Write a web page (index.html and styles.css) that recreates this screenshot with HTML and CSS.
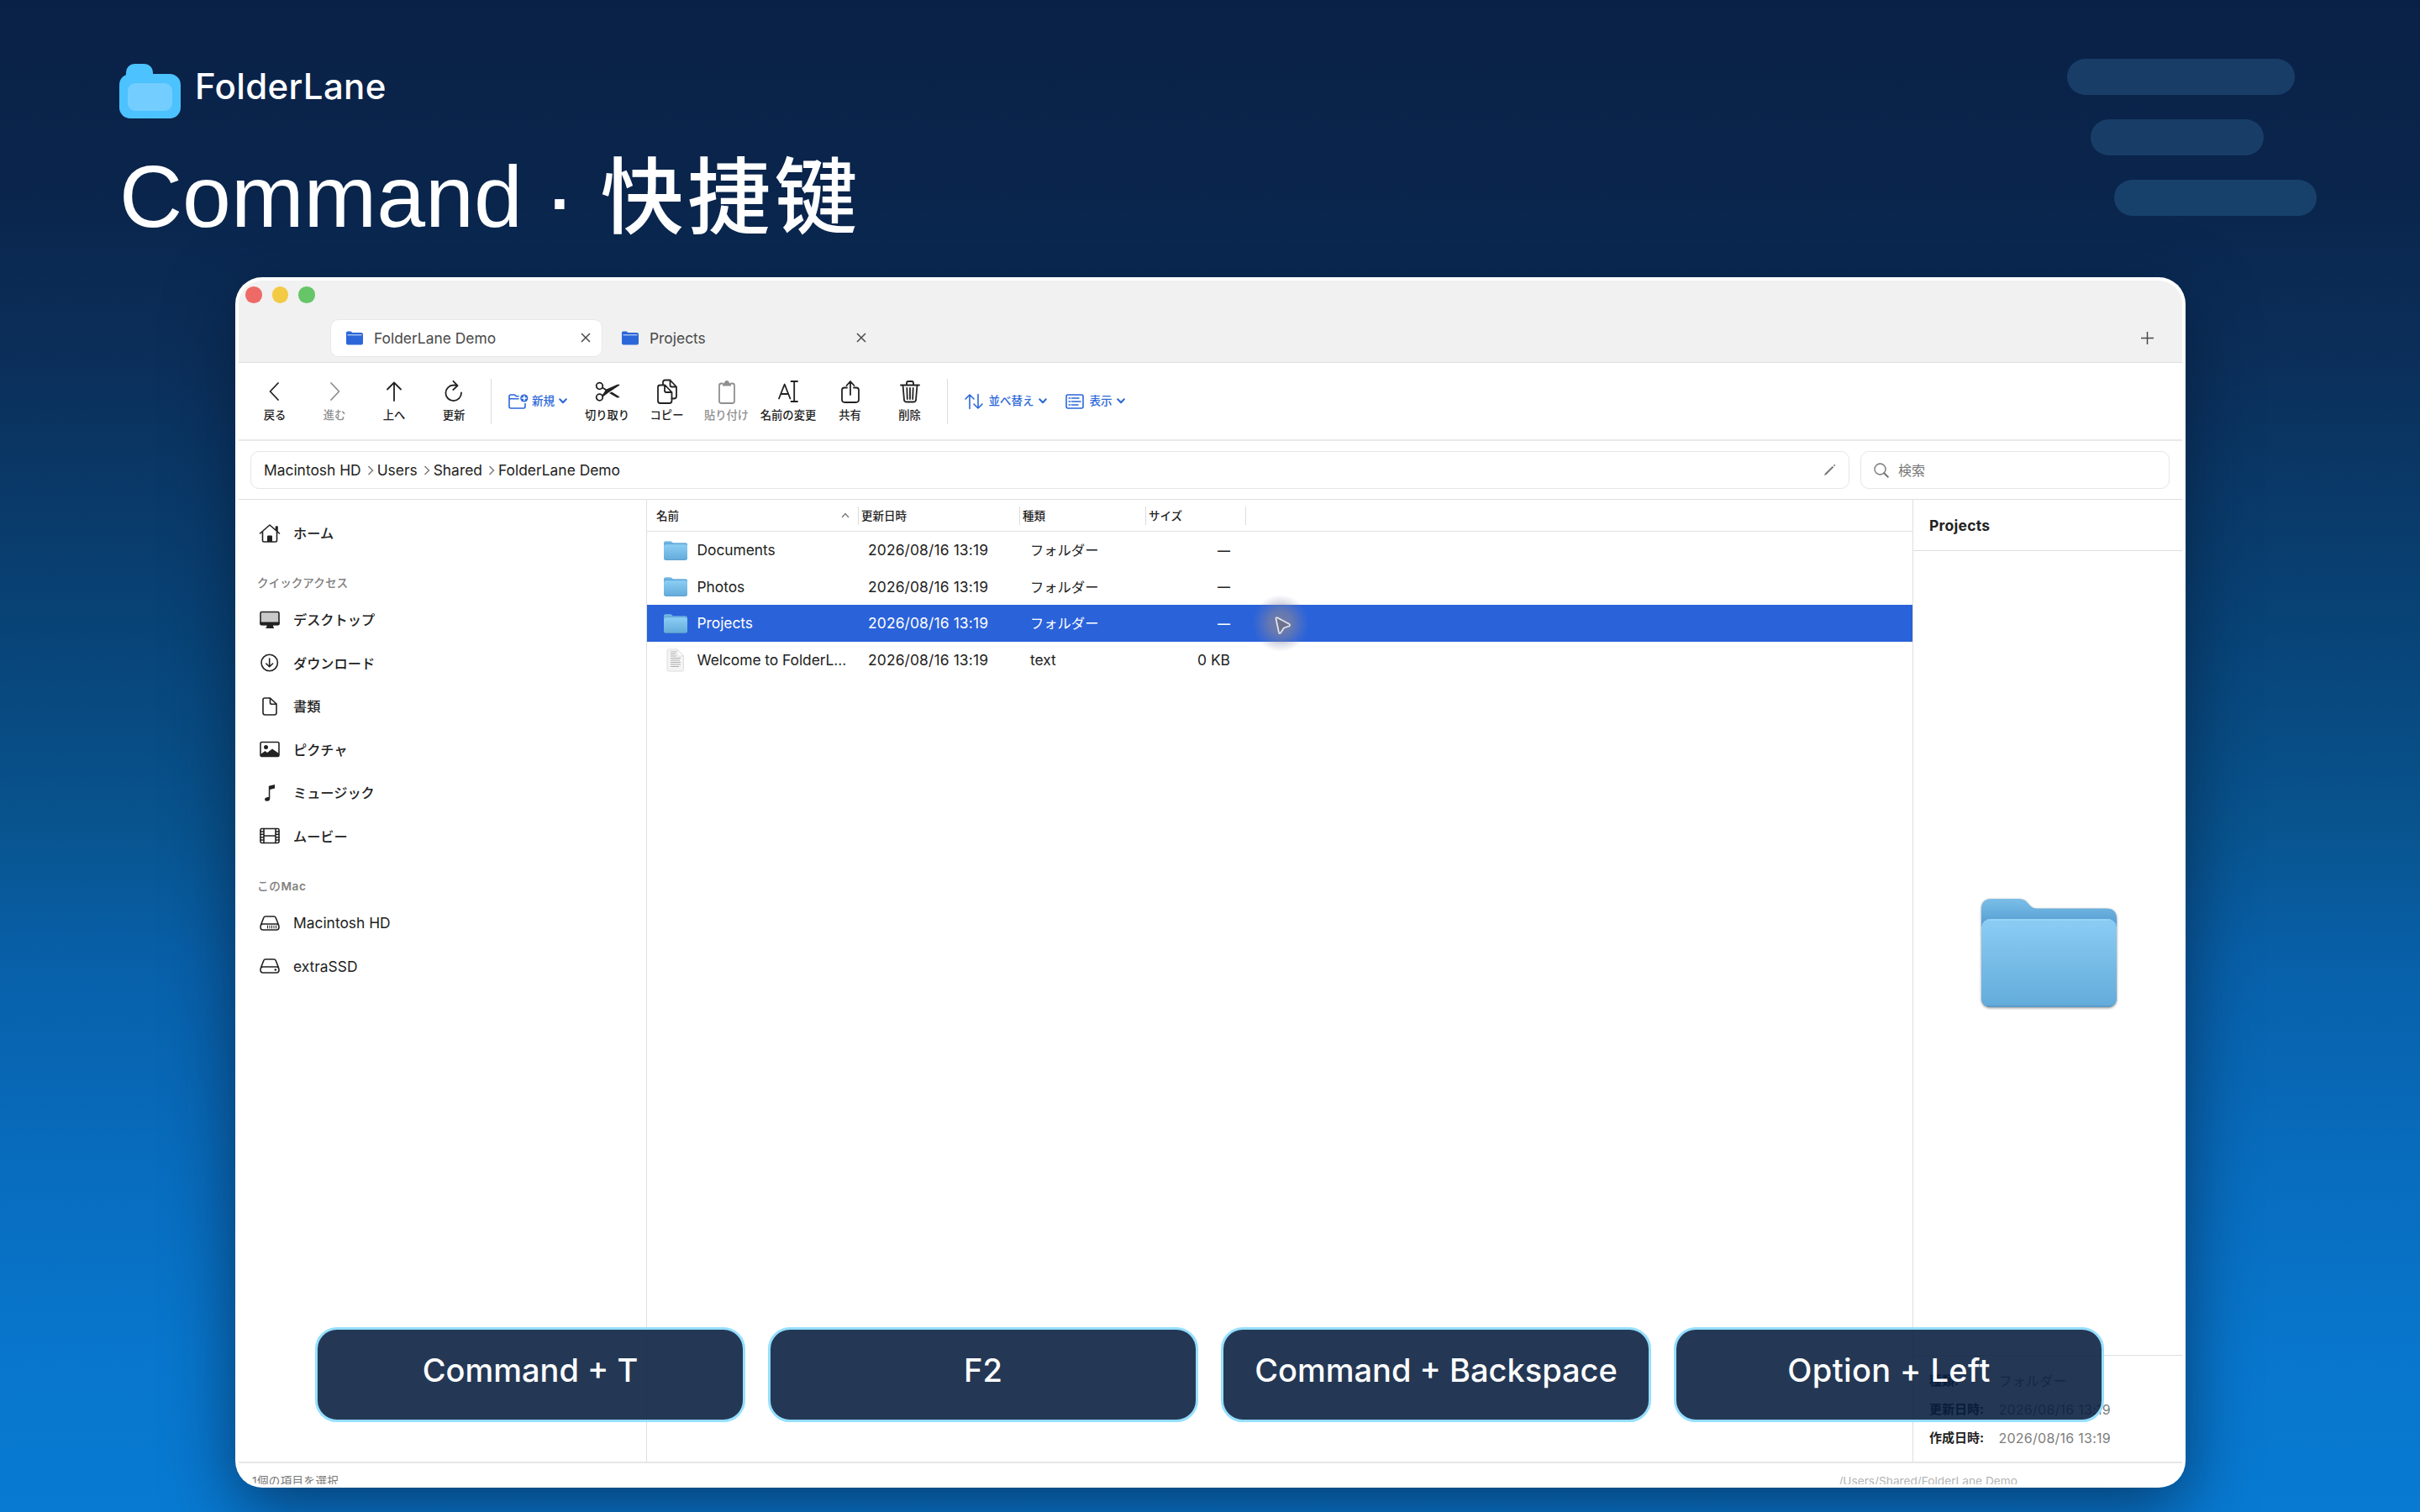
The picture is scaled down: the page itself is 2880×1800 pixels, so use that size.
FILE: index.html
```html
<!DOCTYPE html>
<html lang="ja">
<head>
    <meta charset="UTF-8">
    <meta name="viewport" content="width=device-width, initial-scale=1.0">
    <title>FolderLane | Shortcuts</title>
    <link rel="stylesheet" href="styles.css">
</head>
<body>
    <!-- Shared icons -->
    <svg class="defs" width="0" height="0">
        <defs>
            <linearGradient id="back" x1="0" y1="0" x2="0" y2="1">
                <stop offset="0" stop-color="#7bbfe8"/>
                <stop offset="0.2" stop-color="#5ba3d6"/>
                <stop offset="0.3" stop-color="#4a92cb"/>
            </linearGradient>
            <linearGradient id="front" x1="0" y1="0" x2="0" y2="1">
                <stop offset="0" stop-color="#8bcdf4"/>
                <stop offset="0.97" stop-color="#64acdb"/>
                <stop offset="1" stop-color="#5596c4"/>
            </linearGradient>
            <symbol id="folder" viewBox="0 0 161 130">
                <path d="M0 12Q0 0 12 0H45Q52 0 56 6Q60 11.5 66 11.5H149Q161 11.5 161 24V117Q161 129 149 129H12Q0 129 0 117Z" fill="url(#back)"/>
                <path d="M0 34Q1 24 12 24H149Q160 24 161 34V117Q161 129 149 129H12Q0 129 0 117Z" fill="url(#front)"/>
                <path d="M7 25H154" stroke="#a5dbf8" stroke-width="1.2"/>
            </symbol>
            <symbol id="tab-folder" viewBox="0 0 20 17">
                <path d="M0 2Q0 0.5 1.5 0.5H5.5L7.5 2H18Q20 2 20 4V14.500Q20 16.500 18 16.500H2Q0 16.500 0 14.500Z" fill="#2b67d8"/>
                <path d="M1.500 4.800H18.500" stroke="#dfe9fb" stroke-width="1"/>
            </symbol>
            <symbol id="close" viewBox="0 0 12 12">
                <path d="M1 1L11 11M11 1L1 11" fill="none" stroke="#4a4a4a" stroke-width="1.5"/>
            </symbol>
            <symbol id="crumb" viewBox="0 0 8 12">
                <path d="M1.500 1L6.500 6L1.500 11" fill="none" stroke="#7d7d7d" stroke-width="1.500"/>
            </symbol>
            <symbol id="chevron" viewBox="0 0 10 7">
                <path d="M1.200 1.200L5 5.200L8.800 1.200" fill="none" stroke="#2b67d8" stroke-width="2" stroke-linecap="round" stroke-linejoin="round"/>
            </symbol>
        </defs>
    </svg>

    <header class="hero">
        <div class="hero-text">
            <div class="brand">
                <svg class="brand-logo" width="73" height="65" viewBox="0 0 73 65">
                    <rect x="8" y="0" width="32" height="30" rx="10" fill="#4cc2ff"/>
                    <rect x="0" y="12" width="73" height="53" rx="13" fill="#4cc2ff"/>
                    <rect x="10" y="23" width="53" height="33" rx="9" fill="#73ceff"/>
                </svg>
                <span class="brand-name">FolderLane</span>
            </div>
            <h1>Command <b>·</b> <span>快捷键</span></h1>
        </div>
        <div class="lanes">
            <div class="lane lane-1"></div>
            <div class="lane lane-2"></div>
            <div class="lane lane-3"></div>
        </div>
    </header>

    <div class="window">
        <div class="app">
            <div class="tabbar">
                <div class="lights">
                    <i class="red"></i><i class="yellow"></i><i class="green"></i>
                </div>
                <div class="tabs">
                    <div class="tab active">
                        <svg width="20" height="17"><use href="#tab-folder"/></svg>
                        <span>FolderLane Demo</span>
                        <svg width="12" height="12"><use href="#close"/></svg>
                    </div>
                    <div class="tab">
                        <svg width="20" height="17"><use href="#tab-folder"/></svg>
                        <span>Projects</span>
                        <svg width="12" height="12"><use href="#close"/></svg>
                    </div>
                    <svg class="add-tab" width="15" height="15" viewBox="0 0 15 15"><path d="M7.500 0V15M0 7.500H15" stroke="#4a4a4a" stroke-width="1.500"/></svg>
                </div>
            </div>

            <div class="toolbar">
                <div class="tool">
                    <svg width="30" height="30" viewBox="0 0 30 30"><path d="M19 5L9.500 15L19 25"/></svg>
                    <span>戻る</span>
                </div>
                <div class="tool disabled">
                    <svg width="30" height="30" viewBox="0 0 30 30"><path d="M11 5L20.500 15L11 25"/></svg>
                    <span>進む</span>
                </div>
                <div class="tool">
                    <svg width="30" height="30" viewBox="0 0 30 30"><path d="M15 26V4.500M7 12.500L15 4.500L23 12.500"/></svg>
                    <span>上へ</span>
                </div>
                <div class="tool">
                    <svg width="30" height="30" viewBox="0 0 30 30"><path d="M24 16.500A9.300 9.300 0 1 1 14.700 7.500Q17 7.400 19 8.200M14.500 2.800L19.600 8.200L14.300 13"/></svg>
                    <span>更新</span>
                </div>
                <div class="divider"></div>
                <div class="menu menu-new">
                    <svg width="24" height="18" viewBox="0 0 24 18"><path d="M12 2.800H9.500L7.500 1H3Q1 1 1 3V15Q1 17 3 17H18Q20 17 20 15V11.500M1 5.800H12"/><circle cx="18.800" cy="5" r="4.600" fill="#2b67d8" stroke="none"/><path d="M18.800 2.500V7.500M16.300 5H21.300" stroke="#fff"/></svg>
                    <span>新規</span>
                    <svg width="10" height="7"><use href="#chevron"/></svg>
                </div>
                <div class="tool">
                    <svg width="30" height="30" viewBox="0 0 30 30"><circle cx="5.500" cy="8.500" r="3.800"/><circle cx="5.500" cy="22" r="3.800"/><path d="M9 10.500L13 13M9 20L13.500 16.500"/><path d="M8.700 19.700L13 12.700L26 7Q29 6 29.500 7.500L16 16.500L10 21ZM17 17L20 15.500L29.500 21.500Q28.500 23 26 22.300Z" fill="#222" stroke="none"/></svg>
                    <span>切り取り</span>
                </div>
                <div class="tool">
                    <svg width="30" height="30" viewBox="0 0 30 30"><path d="M10 7V4Q10 1.500 12.500 1.500H18.500L26 9.500V20.500Q26 23.500 23 23.500H20.500M18.500 1.500V7.500Q18.500 9.500 20.500 9.500H26"/><path d="M6.500 7.500H12.500L20.500 16V26Q20.500 29 17.500 29H6.500Q4 29 4 26V10Q4 7.500 6.500 7.500ZM12 7.500V14Q12 16 14 16H20.500"/></svg>
                    <span>コピー</span>
                </div>
                <div class="tool disabled">
                    <svg width="30" height="30" viewBox="0 0 30 30"><path d="M10 5.500H8.500Q6 5.500 6 8V26.500Q6 29 8.500 29H21.500Q24 29 24 26.500V8Q24 5.500 21.500 5.500H20"/><path d="M10 8.500V6.500Q10 5 12 5Q12.500 2 15 2Q17.500 2 18 5Q20 5 20 6.500V8.500Z" fill="#8f8f8f" stroke="none"/></svg>
                    <span>貼り付け</span>
                </div>
                <div class="tool wide">
                    <svg width="30" height="30" viewBox="0 0 30 30"><path d="M4 23.500L10.700 6.500L17.400 23.500M6.200 18H15.200M18.500 3H26M18.500 27H26M22.200 3V27"/></svg>
                    <span>名前の変更</span>
                </div>
                <div class="tool">
                    <svg width="30" height="30" viewBox="0 0 30 30"><path d="M11 10.500H8Q5 10.500 5 13.500V24.500Q5 28 8.500 28H21.500Q25 28 25 24.500V13.500Q25 10.500 22 10.500H19M15 19V3.500M10.500 8L15 3L19.500 8"/></svg>
                    <span>共有</span>
                </div>
                <div class="tool">
                    <svg width="30" height="30" viewBox="0 0 30 30"><path d="M4 7.500H26M6.500 7.500L8 25Q8.200 27.500 10.500 27.500H19.500Q21.800 27.500 22 25L23.500 7.500M11 7V5Q11 3 13 3H17Q19 3 19 5V7M11.300 11L11.800 24M15 11V24M18.700 11L18.200 24"/></svg>
                    <span>削除</span>
                </div>
                <div class="divider"></div>
                <div class="menu menu-sort">
                    <svg width="22" height="20" viewBox="0 0 22 20"><path d="M6 18.500V2M1 7L6 2L11 7M16 1.500V18M11 13L16 18L21 13"/></svg>
                    <span>並べ替え</span>
                    <svg width="10" height="7"><use href="#chevron"/></svg>
                </div>
                <div class="menu menu-view">
                    <svg width="22" height="18" viewBox="0 0 22 18"><rect x="1" y="1" width="20" height="16" rx="2"/><path d="M4.200 5H5.600M4.200 9H5.600M4.200 13H5.600M7.500 5H16M7.500 9H18M7.500 13H15"/></svg>
                    <span>表示</span>
                    <svg width="10" height="7"><use href="#chevron"/></svg>
                </div>
            </div>

            <div class="pathbar">
                <div class="path">
                    <span>Macintosh HD</span>
                    <svg width="8" height="12"><use href="#crumb"/></svg>
                    <span>Users</span>
                    <svg width="8" height="12"><use href="#crumb"/></svg>
                    <span>Shared</span>
                    <svg width="8" height="12"><use href="#crumb"/></svg>
                    <span>FolderLane Demo</span>
                    <svg class="pencil" width="15" height="15" viewBox="0 0 15 15"><path d="M1 14L2 11.500L10.800 2.900L12.300 4.300L3.500 13Z" fill="#777"/><path d="M11.800 1.900L13 0.800L14.300 2L13.200 3.200Z" fill="#777"/></svg>
                </div>
                <div class="search">
                    <svg width="18" height="18" viewBox="0 0 18 18"><circle cx="7.500" cy="7.500" r="6.500" fill="none" stroke="#777" stroke-width="1.400"/><path d="M12.300 12.300L16.800 16.800" stroke="#777" stroke-width="2" stroke-linecap="round"/></svg>
                    <span>検索</span>
                </div>
            </div>

            <div class="content">
                <aside class="sidebar">
                    <div class="side-item">
                        <svg width="26" height="26" viewBox="0 0 26 26"><path d="M1.500 13L13 3L24.500 13M4.500 11V21.500Q4.500 23 6 23H20Q21.500 23 21.500 21.500V11M20.500 9V5H22V10.500"/><path d="M10 23V16.500Q10 15.500 11 15.500H15Q16 15.500 16 16.500V23Z" fill="#222" stroke="none"/></svg>
                        <span>ホーム</span>
                    </div>
                    <div class="side-title">クイックアクセス</div>
                    <div class="side-item">
                        <svg width="26" height="26" viewBox="0 0 26 26"><rect x="2" y="3.500" width="22" height="15" rx="1.500" fill="#c9c9c9"/><path d="M1.300 15.500H24.700V17.500Q24.700 19.500 23 19.500H17V21.500H18V23H8.500V21.500H9.500V19.500H3Q1.300 19.500 1.300 17.500Z" fill="#222" stroke="none"/></svg>
                        <span>デスクトップ</span>
                    </div>
                    <div class="side-item">
                        <svg width="26" height="26" viewBox="0 0 26 26"><circle cx="12.700" cy="13" r="9.700"/><path d="M12.700 8V17.500M8.800 14L12.700 17.800L16.600 14"/></svg>
                        <span>ダウンロード</span>
                    </div>
                    <div class="side-item">
                        <svg width="26" height="26" viewBox="0 0 26 26"><path d="M7 3H13.500L21 10V20.500Q21 23 18.500 23H7.500Q5 23 5 20.500V5Q5 3 7 3ZM13.500 3V8.500Q13.500 10.300 15.500 10.300H21"/></svg>
                        <span>書類</span>
                    </div>
                    <div class="side-item">
                        <svg width="26" height="26" viewBox="0 0 26 26"><rect x="2" y="4.500" width="22" height="17" rx="1.500"/><circle cx="8.500" cy="10.500" r="2.500" fill="#222" stroke="none"/><path d="M2 19L7.500 15L10 17L16 12.500L24 18V20.500Q24 21.500 22 21.500H4Q2 21.500 2 20.500Z" fill="#222" stroke="none"/></svg>
                        <span>ピクチャ</span>
                    </div>
                    <div class="side-item">
                        <svg width="26" height="26" viewBox="0 0 26 26"><path d="M11.800 4.800L19 3V7.500L13.300 9V19.500Q13.300 22.800 9.500 22.800Q7 22.800 7 20.700Q7 18.800 9.500 18.300L11.800 17.800Z" fill="#222" stroke="none"/></svg>
                        <span>ミュージック</span>
                    </div>
                    <div class="side-item">
                        <svg width="26" height="26" viewBox="0 0 26 26"><rect x="2" y="4.500" width="22" height="17" rx="1.500"/><path d="M6 4.500V21.500M20 4.500V21.500M6 13H20M2 8H6M2 11.300H6M2 14.700H6M2 18H6M20 8H24M20 11.300H24M20 14.700H24M20 18H24"/></svg>
                        <span>ムービー</span>
                    </div>
                    <div class="side-title mac">この<b>Mac</b></div>
                    <div class="side-item latin">
                        <svg width="26" height="26" viewBox="0 0 26 26"><path d="M2.500 15L5.800 6.500Q6.400 5 8 5H18Q19.600 5 20.200 6.500L23.500 15M5 14H21Q24 14 24 17.500Q24 21 21 21H5Q2 21 2 17.500Q2 14 5 14Z"/><path d="M10.500 16V19M13 16V19M15.500 16V19M18 16V19M20.500 16V19" stroke-width="1"/></svg>
                        <span>Macintosh HD</span>
                    </div>
                    <div class="side-item latin">
                        <svg width="26" height="26" viewBox="0 0 26 26"><path d="M2.500 15L5.800 6.500Q6.400 5 8 5H18Q19.600 5 20.200 6.500L23.500 15M5 14H21Q24 14 24 17.500Q24 21 21 21H5Q2 21 2 17.500Q2 14 5 14Z"/><circle cx="19.800" cy="17.500" r="1.300" fill="#222" stroke="none"/></svg>
                        <span>extraSSD</span>
                    </div>
                </aside>

                <main class="files">
                    <div class="file-head">
                        <div class="name-head">名前 <svg width="10" height="7" viewBox="0 0 10 7"><path d="M1 6L5 1.500L9 6" fill="none" stroke="#777" stroke-width="1.300"/></svg></div>
                        <div>更新日時</div>
                        <div>種類</div>
                        <div>サイズ</div>
                    </div>
                    <div class="file-row">
                        <div class="file-name"><svg width="28" height="23"><use href="#folder"/></svg>Documents</div>
                        <div class="date">2026/08/16 13:19</div>
                        <div class="kind">フォルダー</div>
                        <div class="size dash">—</div>
                    </div>
                    <div class="file-row">
                        <div class="file-name"><svg width="28" height="23"><use href="#folder"/></svg>Photos</div>
                        <div class="date">2026/08/16 13:19</div>
                        <div class="kind">フォルダー</div>
                        <div class="size dash">—</div>
                    </div>
                    <div class="file-row selected">
                        <div class="file-name"><svg width="28" height="23"><use href="#folder"/></svg>Projects</div>
                        <div class="date">2026/08/16 13:19</div>
                        <div class="kind">フォルダー</div>
                        <div class="size dash">—</div>
                        <div class="cursor">
                            <svg width="22" height="24" viewBox="0 0 22 24"><path d="M2.500 3.500Q2.500 1.500 4.500 2.500L18.500 10Q20 11.500 18 12.500L12 14.500L8 20.500Q6.500 22 6 20Z" fill="#6b7390" stroke="#e6e6ea" stroke-width="1.700" stroke-linejoin="round"/></svg>
                        </div>
                    </div>
                    <div class="file-row">
                        <div class="file-name"><svg width="28" height="28" viewBox="0 0 28 28"><path d="M5.500 1H16L23.500 9V25.500Q23.500 27 22 27H5.500Q4 27 4 25.500V2.500Q4 1 5.500 1Z" fill="#f4f4f4" stroke="#dedede"/><path d="M16 1V7.500Q16 9 17.500 9H23.500Z" fill="#fff" stroke="#ddd"/><path d="M8 4H15M8 6.500H14M8 9H15M8 11.500H20M8 14H19M8 16.500H20M8 19H20M8 21.500H18" stroke="#b0b0b0" stroke-width="1.200"/></svg>Welcome to FolderL...</div>
                        <div class="date">2026/08/16 13:19</div>
                        <div class="kind text">text</div>
                        <div class="size">0 KB</div>
                    </div>
                </main>

                <aside class="preview">
                    <div class="preview-title">Projects</div>
                    <div class="preview-body">
                        <svg class="big-folder" width="161" height="130"><use href="#folder"/></svg>
                    </div>
                    <div class="details">
                        <div class="detail"><b>種類:</b><span>フォルダー</span></div>
                        <div class="detail"><b>更新日時:</b><span>2026/08/16 13:19</span></div>
                        <div class="detail"><b>作成日時:</b><span>2026/08/16 13:19</span></div>
                    </div>
                </aside>
            </div>

            <div class="statusbar">
                <span>1個の項目を選択</span>
                <span class="status-path">/Users/Shared/FolderLane Demo</span>
            </div>
        </div>

        <!-- Shortcut keys over the window -->
        <div class="keys">
            <div class="key">Command + T</div>
            <div class="key">F2</div>
            <div class="key">Command + Backspace</div>
            <div class="key option">Option + Left</div>
        </div>
    </div>
</body>
</html>
```
FILE: styles.css
```css
* {
    box-sizing: border-box;
}

body {
    margin: 0;
    height: 1800px;
    overflow: hidden;
    font-family: Inter, "Noto Sans CJK JP", sans-serif;
    color: #222;
    background: linear-gradient(#0a2147 0, #0a254c 230px, #0b2f5a 430px, #084478 758px, #08548f 987px, #0860a9 1148px, #086cbd 1378px, #0876cc 1607px, #087ad2 1800px);
}

svg {
    display: block;
    flex: none;
}

.defs {
    position: absolute;
}

/* Hero */
.hero {
    height: 330px;
    display: flex;
    justify-content: space-between;
    padding: 70px 123px 0 142px;
    color: #fff;
}

.brand {
    display: flex;
    gap: 17px;
    padding-top: 6px;
}

.brand-name {
    font-size: 42px;
    font-weight: 500;
    line-height: 54px;
    letter-spacing: 0.35px;
}

.hero h1 {
    margin: 18px 0 0;
    font-family: "Liberation Sans", "Noto Sans CJK SC", sans-serif;
    font-size: 104px;
    font-weight: 500;
    line-height: 150px;
    white-space: nowrap;
}

.hero h1 b {
    display: inline-block;
    width: 35px;
    font-size: 80px;
    line-height: 100px;
    text-align: center;
}

.hero h1 span {
    font-size: 99px;
    letter-spacing: 4.500px;
}

.lanes {
    width: 297px;
    display: flex;
    flex-direction: column;
    gap: 29px;
}

.lane {
    height: 43px;
    border-radius: 22px;
    background: #183e68;
}

.lane-1 {
    width: 271px;
}

.lane-2 {
    width: 206px;
    margin-left: 28px;
}

.lane-3 {
    width: 241px;
    margin-left: 56px;
    background: #17406a;
}

/* Window */
.window {
    position: relative;
    width: 2321px;
    height: 1441px;
    margin-left: 280px;
    padding: 4px;
    background: #fff;
    border-radius: 32px;
    box-shadow: 0 24px 80px rgba(6, 22, 46, 0.6);
}

.app {
    height: 1433px;
    display: flex;
    flex-direction: column;
    border-radius: 28px;
    overflow: hidden;
    background: #fff;
}

.tabbar {
    height: 98px;
    flex: none;
    background: #f1f1f1;
    border-bottom: 1px solid #e0e0e0;
}

.lights {
    display: flex;
    gap: 12px;
    padding: 7px 0 0 8px;
}

.lights i {
    width: 19.500px;
    height: 19.500px;
    border-radius: 50%;
}

.red { background: #ee6a66; }
.yellow { background: #f3ca44; }
.green { background: #66c568; }

.tabs {
    display: flex;
    align-items: center;
    gap: 4px;
    padding: 19px 34px 0 109px;
}

.tab {
    width: 324px;
    height: 45px;
    display: flex;
    align-items: center;
    gap: 13px;
    padding: 0 14px 0 19px;
    border-radius: 10px;
    font-size: 17.400px;
    color: #4a4a4a;
}

.tab span {
    flex: 1;
}

.tab.active {
    background: #fff;
    border: 1px solid #e8e8e8;
    padding: 0 13px 0 18px;
}

.add-tab {
    margin-left: auto;
}

.toolbar {
    height: 93px;
    flex: none;
    display: flex;
    align-items: center;
    padding-left: 10px;
    border-bottom: 2px solid #e8e8e8;
}

.tool {
    width: 66px;
    margin-right: 5px;
    padding-top: 2px;
    display: flex;
    flex-direction: column;
    align-items: center;
    gap: 1px;
    font-size: 13.300px;
    font-weight: 500;
    line-height: 24px;
    white-space: nowrap;
}

.tool.wide {
    width: 71px;
}

.tool svg,
.side-item svg {
    fill: none;
    stroke: #222;
    stroke-width: 1.8;
    stroke-linecap: round;
    stroke-linejoin: round;
}

.tool.disabled {
    color: #8f8f8f;
}

.tool.disabled svg {
    stroke: #8f8f8f;
}

.divider {
    width: 1px;
    height: 54px;
    margin: 0 20px 0 6px;
    background: #dcdcdc;
}

.menu {
    display: flex;
    align-items: center;
    gap: 4px;
    font-size: 13.500px;
    font-weight: 500;
    color: #2b67d8;
}

.menu span {
    line-height: 20px;
    padding-bottom: 1px;
}

.menu > svg:first-child {
    fill: none;
    stroke: #2b67d8;
    stroke-width: 1.6;
    stroke-linecap: round;
    stroke-linejoin: round;
}

.menu-new {
    margin-right: 14.500px;
}

.menu-new svg:last-child {
    margin-left: 1px;
}

.menu-sort {
    margin-right: 22px;
}

.menu-sort span,
.menu-view span {
    margin: 0 1px 0 3px;
}

.pathbar {
    height: 70px;
    flex: none;
    display: flex;
    gap: 13px;
    padding: 12px 15px 0 14px;
    border-bottom: 1px solid #dedede;
}

.path,
.search {
    height: 45px;
    display: flex;
    align-items: center;
    border: 1px solid #e6e6e6;
    border-radius: 10px;
    font-size: 17.400px;
}

.path {
    flex: 1;
    padding: 0 15px;
}

.path > svg {
    margin: 0 4px 0 7px;
}

.path > .pencil {
    margin: 0 0 0 auto;
}

.search {
    width: 368px;
    gap: 11px;
    padding-left: 15px;
    font-size: 16px;
    color: #777;
}

.search span {
    padding-bottom: 2px;
}

.content {
    height: 1145px;
    flex: none;
    display: flex;
}

/* Sidebar */
.sidebar {
    width: 486px;
    padding-top: 14px;
    border-right: 1px solid #e0e0e0;
}

.side-item {
    height: 51.500px;
    display: flex;
    align-items: center;
    gap: 15px;
    padding-left: 24px;
    font-size: 16.200px;
    font-weight: 500;
}

.side-item span {
    padding-bottom: 1px;
}

.side-item svg {
    stroke-width: 1.6;
}

.side-item.latin {
    font-size: 17.400px;
    font-weight: 400;
}

.side-item.latin span {
    padding-bottom: 0;
}

.side-title {
    height: 51.700px;
    padding: 16px 0 0 22px;
    font-size: 13.600px;
    font-weight: 500;
    line-height: 35px;
    color: #808080;
}

.side-title.mac {
    line-height: 37px;
    letter-spacing: 0.600px;
}

.side-title b {
    font-weight: 600;
}

/* File list */
.files {
    width: 1506px;
}

.file-head,
.file-row {
    display: grid;
    grid-template-columns: 252px 192px 150px 119px;
}

.file-head {
    height: 38px;
    align-items: center;
    border-bottom: 1px solid #e0e0e0;
    font-size: 13.500px;
    font-weight: 500;
    line-height: 22px;
}

.file-head div {
    padding-left: 3px;
    border-right: 1px solid #dcdcdc;
}

.file-head .name-head {
    display: flex;
    align-items: center;
    justify-content: space-between;
    padding: 0 10px 0 11px;
}

.file-row {
    position: relative;
    height: 43.500px;
    align-items: center;
    padding-top: 1px;
    font-size: 17.400px;
    line-height: 24px;
    white-space: nowrap;
}

.file-name {
    display: flex;
    align-items: center;
    gap: 11.500px;
    padding-left: 20px;
    letter-spacing: -0.050px;
}

.date {
    padding-left: 11px;
    letter-spacing: 0.150px;
}

.kind {
    padding-left: 12px;
    font-size: 16.300px;
}

.kind.text {
    font-size: 17.400px;
}

.size {
    padding-right: 19px;
    text-align: right;
}

.size.dash {
    font-size: 15px;
    font-weight: 500;
    padding-top: 1px;
}

.selected {
    background: #2a62da;
    color: #fff;
}

.cursor {
    position: absolute;
    left: 720px;
    top: -12px;
    width: 68px;
    height: 68px;
    padding: 25px 0 0 26px;
    border-radius: 50%;
    background: radial-gradient(closest-side, rgba(125, 130, 160, 0.9) 0%, rgba(125, 130, 160, 0.7) 40%, rgba(125, 130, 170, 0.25) 75%, rgba(125, 130, 170, 0) 100%);
}

/* Preview */
.preview {
    flex: 1;
    display: flex;
    flex-direction: column;
    border-left: 1px solid #dedede;
}

.preview-title {
    height: 61px;
    padding-left: 19px;
    border-bottom: 1px solid #dedede;
    font-size: 17.500px;
    font-weight: 700;
    line-height: 62px;
    letter-spacing: 0.250px;
}

.preview-body {
    flex: 1;
    display: flex;
    align-items: center;
    justify-content: center;
    padding-left: 2px;
}

.big-folder {
    filter: drop-shadow(0 1px 1.500px rgba(0, 0, 0, 0.45));
}

.details {
    height: 127px;
    padding: 13px 0 0 19px;
    border-top: 1px solid #dedede;
    font-size: 16px;
    line-height: 34px;
}

.detail {
    height: 34px;
    display: flex;
}

.detail b {
    width: 82.500px;
    font-size: 15px;
    font-weight: 700;
}

.detail span {
    color: #7d7d7d;
    letter-spacing: 0.250px;
}

.statusbar {
    height: 27px;
    display: flex;
    justify-content: space-between;
    padding: 8px 196px 0 16px;
    border-top: 2px solid #e6e6e6;
    font-size: 13.500px;
    line-height: 27px;
    letter-spacing: 0.400px;
    color: #777;
}

.status-path {
    font-size: 13.700px;
    letter-spacing: 0;
    color: #b5b5b5;
}

/* Shortcut keys */
.keys {
    position: absolute;
    left: 95px;
    top: 1250px;
    width: 2129px;
    display: grid;
    grid-template-columns: repeat(4, 1fr);
    gap: 27px;
}

.key {
    height: 113px;
    padding-bottom: 12px;
    display: flex;
    align-items: center;
    justify-content: center;
    border: 3px solid #96dfff;
    border-radius: 26px;
    background: rgba(6, 28, 62, 0.88);
    color: #fff;
    font-size: 38px;
    font-weight: 500;
}

.key.option {
    letter-spacing: 0.400px;
}
```
